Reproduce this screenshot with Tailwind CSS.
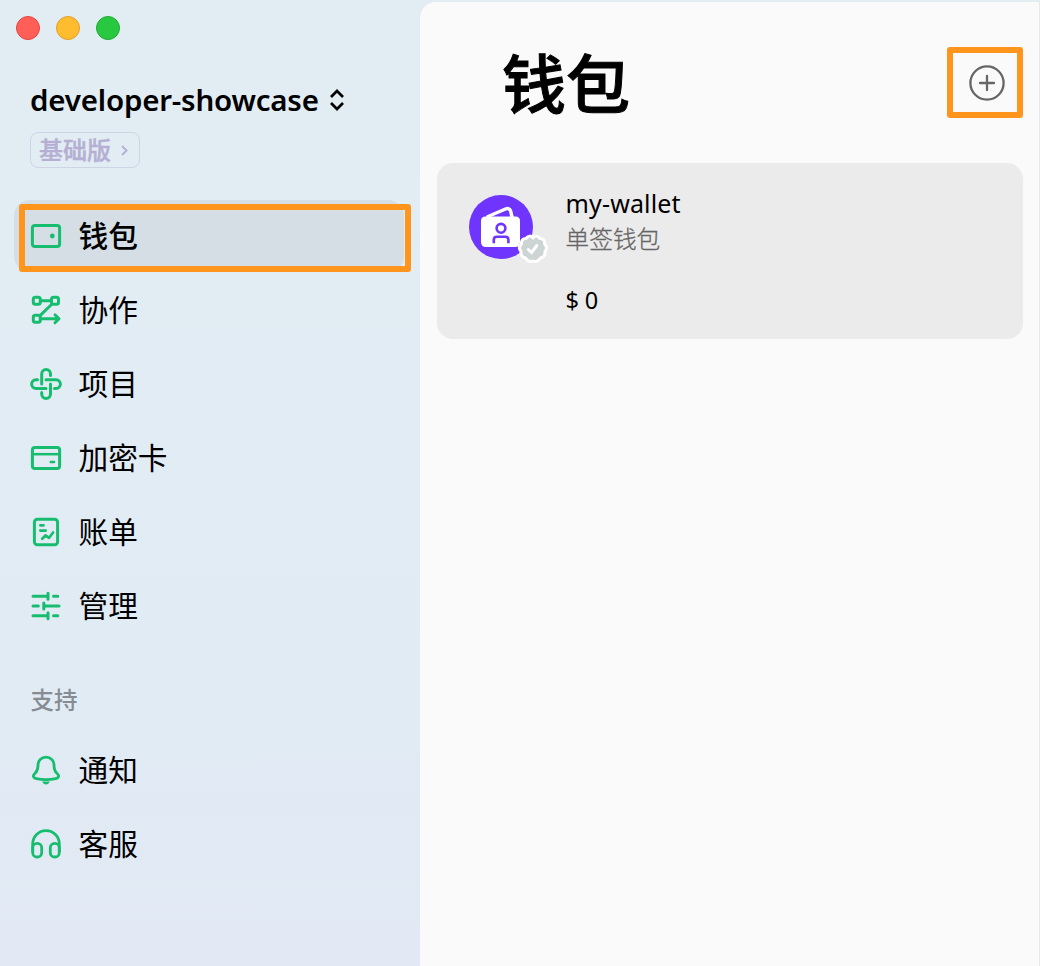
<!DOCTYPE html>
<html lang="zh-CN">
<head>
<meta charset="utf-8">
<title>钱包</title>
<script src="https://cdn.jsdelivr.net/npm/@tailwindcss/browser@4"></script>
</head>
<body class="flex h-[966px] w-[1040px] overflow-hidden bg-linear-to-b from-[#e2edf3] via-[#e1ebf4] via-75% to-[#e2e9f4] font-['Noto_Sans','Noto_Sans_CJK_SC',sans-serif] text-black">
  <aside class="flex w-[420px] shrink-0 flex-col">
    <div class="flex gap-4 pt-4 pl-4">
      <span class="size-6 rounded-full border border-[#e2463f] bg-[#ff5f57]"></span>
      <span class="size-6 rounded-full border border-[#e0a028] bg-[#febc2e]"></span>
      <span class="size-6 rounded-full border border-[#1eac2f] bg-[#28c840]"></span>
    </div>

    <div class="mt-[40px] flex h-10 items-center gap-[11px] pl-[30px]">
      <span class="w-[289px] text-[29.5px] leading-10 font-semibold whitespace-nowrap tracking-[-0.2px]">developer-showcase</span>
      <svg class="h-[22px] w-[14px]" viewBox="0 0 14 22" fill="none" stroke="#000" stroke-width="2.7"><path d="M1 8 7 2l6 6M1 14l6 6 6-6"/></svg>
    </div>
    <div class="mt-3 ml-[30px] flex h-9 w-[110px] items-center rounded-lg border border-[#cfd3e6] pl-2 text-[#b5b0d3]">
      <span class="text-[24px] leading-8 font-medium [-webkit-text-stroke:0.4px]">基础版</span>
      <svg class="ml-[10px] h-[11px] w-[7px]" viewBox="0 0 7 11" fill="none" stroke="currentColor" stroke-width="1.8"><path d="m1 1 4.6 4.5L1 10"/></svg>
    </div>

    <nav class="mt-8 ml-[14px] flex w-[390px] flex-col gap-0.5 text-[29.7px]">
      <a class="relative flex h-[72px] items-center gap-[16.500px] rounded-2xl bg-[#d5dde5] pl-4 font-medium">
        <svg class="size-8" viewBox="0 0 32 32" fill="none" stroke="#17bd6f" stroke-width="3"><rect x="2.4" y="5.4" width="27.2" height="21.2" rx="2.5"/><circle cx="22.3" cy="16" r="2.4" fill="#17bd6f" stroke="none"/></svg>
        <span class="leading-10">钱包</span>
        <span class="absolute top-1 left-[5px] h-[68px] w-[392px] rounded-[3px] border-[6px] border-[#ff951d]"></span>
      </a>
      <a class="flex h-[72px] items-center gap-[16.500px] pl-4">
        <svg class="size-8" viewBox="0 0 32 32" fill="none" stroke="#17bd6f" stroke-width="3" stroke-linecap="round" stroke-linejoin="round"><rect x="3.3" y="3.3" width="7" height="7" rx="2"/><rect x="21.5" y="3.3" width="7" height="7" rx="2"/><rect x="3.3" y="21.3" width="7" height="7" rx="2"/><path d="M10.3 6.8h11.2M22 10 9.8 21.8M10.3 24.8H28.500M25 20.8l4 4-4 4"/></svg>
        <span class="leading-10">协作</span>
      </a>
      <a class="flex h-[72px] items-center gap-[16.500px] pl-4">
        <svg class="size-8" viewBox="0 0 32 32" fill="none" stroke="#17bd6f" stroke-width="3" stroke-linecap="round"><path d="M11.7 16V6a4.4 4.4 0 0 1 8.8 0v1.5M16 11.7h10a4.4 4.4 0 0 1 0 8.8h-1.5M20.5 16v10a4.4 4.4 0 0 1-8.8 0v-1.5M16 20.5H6a4.4 4.4 0 0 1 0-8.8h1.5"/></svg>
        <span class="leading-10">项目</span>
      </a>
      <a class="flex h-[72px] items-center gap-[16.500px] pl-4">
        <svg class="size-8" viewBox="0 0 32 32" fill="none" stroke="#17bd6f" stroke-width="3"><rect x="2.4" y="5.4" width="27.2" height="21.2" rx="2.5"/><path stroke-width="2.5" d="M2.4 12.2h27.2"/><path stroke-width="2.6" stroke-linecap="round" d="M20.800 20h3.2"/></svg>
        <span class="leading-10">加密卡</span>
      </a>
      <a class="flex h-[72px] items-center gap-[16.500px] pl-4">
        <svg class="size-8" viewBox="0 0 32 32" fill="none" stroke="#17bd6f" stroke-width="2.7" stroke-linecap="round" stroke-linejoin="round"><rect x="4.4" y="3.2" width="23.2" height="25.6" rx="3" stroke-width="3"/><path d="M10.3 9.3h3.2M10.3 14.6h5.4M12.2 22.8l3.3-3.3 3.6 2.3 4-5.3"/></svg>
        <span class="leading-10">账单</span>
      </a>
      <a class="flex h-[72px] items-center gap-[16.500px] pl-4">
        <svg class="size-8" viewBox="0 0 32 32" fill="none" stroke="#17bd6f" stroke-width="3" stroke-linecap="round"><path d="M3 6.3h14.5M18 3.3v6M23.5 6.3h4.3M3 16h5.3M13.8 13v6M14 16h15M3 25.7h14.5M18 22.7v6M23.5 25.7h4.3"/></svg>
        <span class="leading-10">管理</span>
      </a>
    </nav>

    <h2 class="mt-[42px] pl-[30.500px] text-[23.5px] leading-8 font-medium text-[#868c92]">支持</h2>
    <nav class="mt-[18px] ml-[14px] flex w-[390px] flex-col gap-0.5 text-[29.7px]">
      <a class="flex h-[72px] items-center gap-[16.500px] pl-4">
        <svg class="size-8" viewBox="0 0 32 32" fill="none" stroke="#17bd6f" stroke-width="2.8" stroke-linejoin="round"><path d="M16 3.2c-4.8 0-8 3.5-8 8 0 3.8-.7 6-2.9 8-2.8 2.5-2 4.7 1.2 5.4 6 1.3 13.4 1.3 19.4 0 3.2-.7 4-2.9 1.2-5.4-2.2-2-2.9-4.2-2.9-8 0-4.5-3.2-8-8-8Z"/><path d="M12 27.500h8q-1.500 3-4 3t-4-3Z" fill="#17bd6f" stroke="none"/></svg>
        <span class="leading-10">通知</span>
      </a>
      <a class="flex h-[72px] items-center gap-[16.500px] pl-4">
        <svg class="size-8" viewBox="0 0 32 32" fill="none" stroke="#17bd6f" stroke-width="2.8"><path d="M2.7 24v-8a13.300 13.300 0 0 1 26.600 0v8"/><rect x="2.7" y="15.400" width="9" height="13.600" rx="4.300"/><rect x="20.300" y="15.400" width="9" height="13.600" rx="4.300"/></svg>
        <span class="leading-10">客服</span>
      </a>
    </nav>
  </aside>

  <main class="mt-0.5 flex grow flex-col rounded-tl-2xl border-r border-[#e6e8ea] bg-[#fafafa]">
    <header class="flex h-[161px] items-start justify-between pr-4 pl-[82px]">
      <h1 class="mt-[34px] text-[64px] leading-[96px] font-medium [-webkit-text-stroke:1px]">钱包</h1>
      <button class="mt-[45px] flex h-[71px] w-[76px] items-center justify-center rounded-[3px] border-[6px] border-[#ff951d] pl-1">
        <svg class="size-9" viewBox="0 0 36 36" fill="none" stroke="#666" stroke-width="2.3" stroke-linecap="round"><circle cx="18" cy="18" r="16.600"/><path d="M18 11v14M11 18h14"/></svg>
      </button>
    </header>
    <section class="ml-[17px] flex h-44 w-[586px] rounded-2xl bg-[#ebebeb] pt-6 pl-8">
      <svg class="mt-2 h-[70px] w-[80px] shrink-0" viewBox="0 0 80 70" fill="none">
        <circle cx="32" cy="32" r="32" fill="#6f35ff"/>
        <path d="M19 21.500 36.500 14q4-1.500 5.200 2.300L43 22" stroke="#fff" stroke-width="3.400" stroke-linecap="round" stroke-linejoin="round"/>
        <path d="M16.500 21.500h30q4.500 0 4.500 4.500v21q0 5-5 5H17q-5 0-5-5V26q0-4.500 4.500-4.500Z" fill="#fff"/>
        <path d="m26.500 20.800 11.500-4.600 2 4.600Z" fill="#6f35ff"/>
        <circle cx="32" cy="33.300" r="4.400" stroke="#6f35ff" stroke-width="2.600"/>
        <path d="M24.800 48.300v-3.600q0-3 3-3h8.600q3 0 3 3V48.300" stroke="#6f35ff" stroke-width="2.600"/>
        <path d="M64 43 Q67.500 39 71 43.500 Q76 43.500 75.500 49 Q79.500 52.500 76 56.500 Q76.500 62 71.500 63 Q68.500 68 64 66 Q59.500 68 56.500 63 Q51.500 62 52 56.500 Q48.500 52.500 52.500 49 Q52 43.500 57 43.500 Q60.500 39 64 43Z" fill="#ccd5d4" stroke="#fff" stroke-width="3" stroke-linejoin="round"/>
        <path d="m59.300 54.500 3.300 3.200 5.200-7.200" stroke="#fff" stroke-width="3" stroke-linecap="round" stroke-linejoin="round"/>
      </svg>
      <div class="ml-[16.500px] flex flex-col">
        <span class="-mt-px text-[25px] leading-[34px] tracking-[0.15px]">my-wallet</span>
        <span class="mt-px text-[23.7px] leading-9 font-light text-[#666] [-webkit-text-stroke:0.3px]">单签钱包</span>
        <span class="mt-[27px] text-[23.5px] leading-8 tracking-[-0.2px]">$ 0</span>
      </div>
    </section>
  </main>
</body>
</html>
